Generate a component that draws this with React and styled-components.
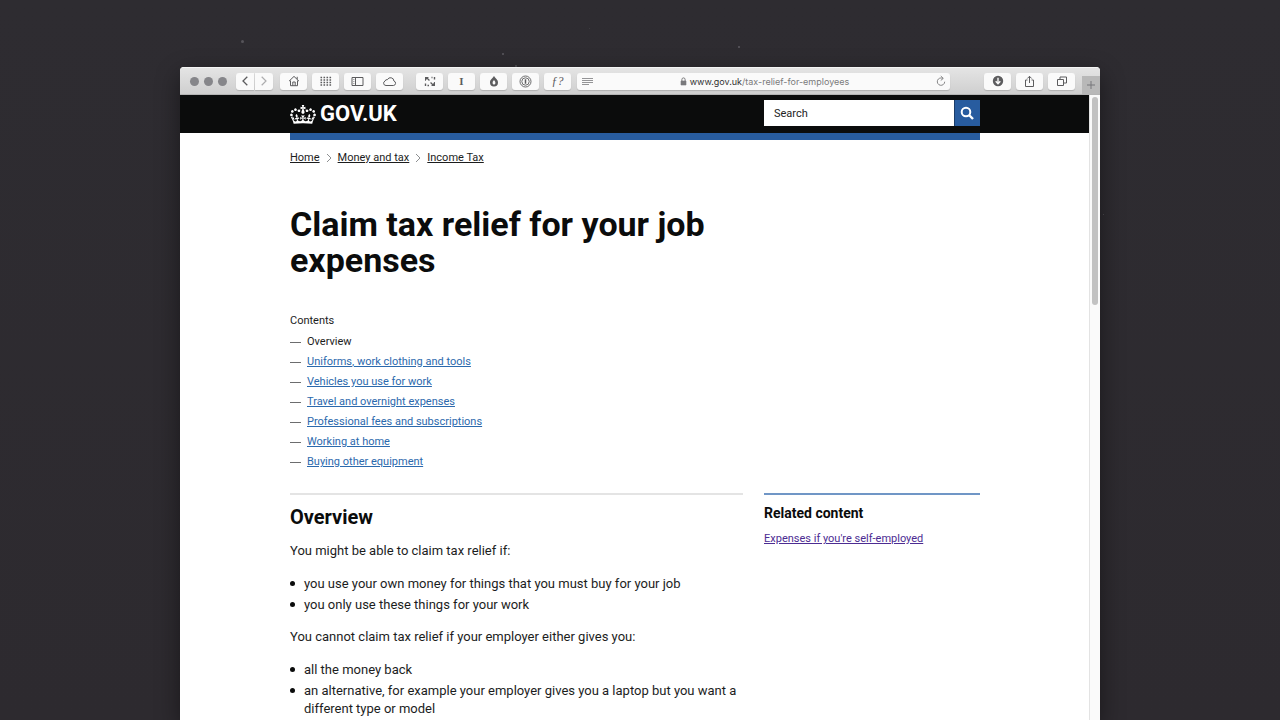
import React from "react";
import styled, { createGlobalStyle } from "styled-components";

const color = {
  ink: "#0b0c0c",
  text: "#1c1d1d",
  blue: "#285c9f",
  link: "#2b69ad",
  visited: "#4c2c92",
  grey: "#8d8f91",
  rule: "#e4e4e4",
  icon: "#5c5c5e",
};

const GlobalStyle = createGlobalStyle`
  *, *::before, *::after { box-sizing: border-box; }
  body {
    margin: 0;
    background: #2d2b30;
    color: ${color.text};
    font-family: Roboto, "Liberation Sans", sans-serif;
  }
  button, input { font: inherit; color: inherit; }
`;

const Desktop = styled.div`
  position: relative;
  display: flex;
  min-height: 100vh;
  padding: 67px 180px 0;
  overflow: hidden;
  background: linear-gradient(#2e2c31, #2d2a2f);
`;

const Speck = styled.span`
  position: absolute;
  left: ${(p) => p.$x}px;
  top: ${(p) => p.$y}px;
  width: ${(p) => p.$size}px;
  height: ${(p) => p.$size}px;
  border-radius: 50%;
  background: ${(p) => p.$tone};
`;

const Window = styled.div`
  position: relative;
  display: flex;
  flex: 1;
  flex-direction: column;
  min-width: 0;
  border-radius: 4px 4px 0 0;
  overflow: hidden;
  background: #fff;
  box-shadow: 0 8px 24px rgba(0, 0, 0, 0.45);
`;

/* Browser chrome */

const Toolbar = styled.div`
  display: flex;
  align-items: center;
  height: 28px;
  padding-left: 10px;
  border-top: 1px solid #f4f4f4;
  border-bottom: 1px solid #b4b4b4;
  background: linear-gradient(#e4e4e4, #cfcfcf);
`;

const Lights = styled.div`
  display: flex;
  gap: 5px;
  margin-right: 9px;
`;

const Light = styled.button`
  width: 9px;
  height: 9px;
  padding: 0;
  border: 0;
  border-radius: 50%;
  background: #86868a;
`;

const Group = styled.div`
  display: flex;
  gap: ${(p) => p.$gap}px;
  margin-right: ${(p) => p.$after}px;
`;

const ToolButton = styled.button`
  display: flex;
  align-items: center;
  justify-content: center;
  width: ${(p) => (p.$narrow ? 18 : 27)}px;
  height: 17px;
  padding: 0;
  border: 0;
  border-radius: ${(p) => p.$corners || "3px"};
  background: #fafafa;
  box-shadow: 0 1px 1px rgba(0, 0, 0, 0.16);
  color: ${(p) => (p.$faded ? "#adadaf" : color.icon)};
`;

const GlyphLabel = styled.span`
  font: ${(p) => (p.$slanted ? "italic 12px" : "bold 11px")} / 16px
    "Liberation Serif", serif;
`;

const AddressBar = styled.div`
  display: flex;
  flex: 1;
  align-items: center;
  justify-content: space-between;
  min-width: 0;
  height: 17px;
  margin-right: 34px;
  padding: 0 4px 0 5px;
  border-radius: 3px;
  background: #fafafa;
  box-shadow: 0 1px 1px rgba(0, 0, 0, 0.16);
`;

const PlainButton = styled.button`
  display: flex;
  align-items: center;
  gap: 3px;
  min-width: 0;
  padding: 0;
  border: 0;
  background: none;
  color: #7a7a7c;
  font-size: 9px;
  line-height: 17px;
  font-family: Inter, "Liberation Sans", sans-serif;
  white-space: nowrap;
`;

const Host = styled.span`
  color: #333;
`;

const NewTab = styled.button`
  display: flex;
  align-items: center;
  justify-content: center;
  align-self: flex-end;
  width: 18px;
  height: 18px;
  margin-left: 7px;
  padding: 0;
  border: 0;
  background: #b8b8b8;
  color: #77777a;
`;

const Viewport = styled.div`
  display: flex;
  flex: 1;
`;

const Page = styled.div`
  flex: 1;
  min-width: 0;
`;

const ScrollTrack = styled.div`
  width: 11px;
  padding: 2px 2px 0;
  border-left: 1px solid #e3e3e3;
  background: #fafafa;
`;

const ScrollThumb = styled.div`
  height: 208px;
  border-radius: 4px;
  background: #c2c2c2;
`;

/* Site */

const Inner = styled.div`
  max-width: 910px;
  padding: 0 109px 0 110px;
`;

const Header = styled.header`
  height: 38px;
  background: ${color.ink};
`;

const HeaderRow = styled(Inner)`
  display: flex;
  align-items: flex-start;
  justify-content: space-between;
  padding-top: 5px;
`;

const Logo = styled.a`
  display: flex;
  align-items: center;
  gap: 4px;
  color: #fff;
  font-size: 22px;
  font-weight: 700;
  line-height: 28px;
  text-decoration: none;
`;

const SearchForm = styled.form`
  display: flex;
  width: 216px;
  height: 26px;
`;

const SearchInput = styled.input`
  flex: 1;
  min-width: 0;
  padding: 0 10px;
  border: 0;
  border-radius: 0;
  background: #fff;
  font-size: 11px;
  &::placeholder { color: #222; opacity: 1; }
`;

const SearchButton = styled.button`
  display: flex;
  align-items: center;
  justify-content: center;
  width: 26px;
  padding: 0;
  border: 0;
  box-shadow: inset 1px 0 #1b3c68;
  background: ${color.blue};
  color: #fff;
`;

const BlueBar = styled.div`
  height: 7px;
  background: ${color.blue};
`;

const Breadcrumbs = styled.ol`
  display: flex;
  align-items: center;
  margin: 0;
  padding: 10px 0 0;
  list-style: none;
  font-size: 11px;
  line-height: 16px;
`;

const Crumb = styled.li`
  display: flex;
  align-items: center;
  svg { margin: 0 6px; }
`;

const CrumbLink = styled.a`
  color: ${color.text};
  text-underline-offset: 1px;
`;

const Columns = styled.div`
  display: grid;
  grid-template-columns: minmax(0, 1fr) 216px;
  column-gap: 21px;
`;

const Title = styled.h1`
  margin: 40px 0 34px;
  color: ${color.ink};
  font-size: 34px;
  line-height: 36px;
`;

const ContentsTitle = styled.h2`
  margin: 0 0 2px;
  font-size: 11px;
  font-weight: 400;
  line-height: 18px;
`;

const ContentsList = styled.ol`
  margin: 0 0 21px;
  padding: 0;
  list-style: none;
  font-size: 11px;
  line-height: 20px;
`;

const ContentsItem = styled.li`
  display: flex;
  align-items: center;
  gap: 6px;
  &::before {
    content: "";
    width: 11px;
    height: 1px;
    background: #6c6d6e;
  }
`;

const TextLink = styled.a`
  color: ${(p) => (p.$visited ? color.visited : color.link)};
  text-underline-offset: 1px;
`;

const Article = styled.article`
  border-top: 2px solid ${color.rule};
`;

const SectionTitle = styled.h2`
  margin: 10px 0 13px;
  color: ${color.ink};
  font-size: 20px;
  line-height: 24px;
`;

const Para = styled.p`
  margin: 0 0 15px;
  font-size: 13px;
  line-height: 18px;
`;

const Bullets = styled.ul`
  display: grid;
  row-gap: 3px;
  margin: 0 0 14px;
  padding: 0;
  list-style: none;
  font-size: 13px;
  line-height: 18px;
  &:last-child { margin-bottom: 0; }
`;

const Bullet = styled.li`
  display: flex;
  gap: 9px;
  &::before {
    content: "";
    flex: none;
    width: 5px;
    height: 5px;
    margin-top: 6px;
    border-radius: 50%;
    background: ${color.ink};
  }
`;

const Related = styled.aside`
  border-top: 2px solid #7096c6;
  font-size: 11px;
  line-height: 16px;
`;

const RelatedTitle = styled.h2`
  margin: 9px 0;
  color: ${color.ink};
  font-size: 14px;
  line-height: 18px;
`;

/* Icons */

const Icon = ({ w = 14, h = 14, sw = 1, children }) => (
  <svg
    width={w}
    height={h}
    viewBox={`0 0 ${w} ${h}`}
    fill="none"
    stroke="currentColor"
    strokeWidth={sw}
    aria-hidden="true"
  >
    {children}
  </svg>
);

const icons = {
  back: <Icon w={8} h={12} sw={1.3}><path d="M6.3 1.8 2 6l4.3 4.2" /></Icon>,
  forward: <Icon w={8} h={12} sw={1.2}><path d="M1.7 1.8 6 6l-4.3 4.2" /></Icon>,
  home: (
    <Icon>
      <path d="M2 7.2 7 2.4l5 4.8M3.5 6.5v5.2h7V6.5M10.2 5.2V2.8" />
      <path d="M5.8 11.7V8h2.4v3.7" />
    </Icon>
  ),
  grid: (
    <Icon w={12} h={10}>
      <path d="M.5 1.5h11M.5 4h11M.5 6.5h11M.5 9h11" strokeDasharray="1.6 1.4" strokeWidth="1.3" />
    </Icon>
  ),
  sidebar: (
    <Icon w={13} h={11}>
      <path d="M1 1.5h11v8H1zM4.5 1.5v8" />
      <path d="M2 3.5h1.5M2 5.5h1.5M2 7.5h1.5" strokeWidth=".5" />
    </Icon>
  ),
  cloud: (
    <Icon w={15} h={11}>
      <path d="M4 9.5h7.4a2.3 2.3 0 0 0 .5-4.5 3.4 3.4 0 0 0-6.5-1.3A2 2 0 0 0 3 5.1 2.3 2.3 0 0 0 4 9.5z" />
    </Icon>
  ),
  expand: (
    <Icon w={12} h={12}>
      <g fill="currentColor" stroke="none">
        <path d="M1 2h4L3.9 3.1l2 2-.9.9-2-2L1.7 5.3V6H1zM11 11H7l1.1-1.1-2-2 .9-.9 2 2L10.3 7H11z" />
      </g>
      <path d="M7.5 2.5h1M10.5 2v2.5M1.5 8.5V11M3.5 10.5h1.5" strokeWidth="1.4" />
    </Icon>
  ),
  flame: (
    <Icon w={10} h={12}>
      <path
        d="M5 .8C5.6 3 9 4.3 9 7.5a4 3.9 0 0 1-8 0C1 4.3 4.4 3 5 .8zM5 5C4.300 6 3.600 6.700 3.600 7.900a1.400 1.600 0 0 0 2.800 0C6.400 6.700 5.700 6 5 5z"
        fill="currentColor"
        fillRule="evenodd"
        stroke="none"
      />
    </Icon>
  ),
  password: (
    <Icon w={13} h={13}>
      <circle cx="6.5" cy="6.5" r="5.5" strokeWidth=".9" />
      <circle cx="6.5" cy="6.5" r="3.7" strokeWidth=".9" />
      <path d="M6.5 4.3v4.4" strokeWidth="1.5" />
    </Icon>
  ),
  reader: (
    <Icon w={11} h={9}>
      <path d="M0 1.5h11M0 3.5h11M0 5.5h11M0 7.5h7" strokeWidth=".8" />
    </Icon>
  ),
  lock: (
    <Icon w={7} h={9}>
      <path d="M1 4h5v4H1z" fill="currentColor" stroke="currentColor" strokeWidth=".6" />
      <path d="M1.9 4V2.5a1.6 1.6 0 0 1 3.2 0V4" />
    </Icon>
  ),
  reload: (
    <Icon w={10} h={12}>
      <path d="M6.8 3.4A3.7 3.7 0 1 0 8.7 6.7M4.8 1l2.500 2.400-2.500 2" strokeWidth=".9" />
    </Icon>
  ),
  download: (
    <Icon w={12} h={12}>
      <circle cx="6" cy="6" r="5.2" fill="currentColor" stroke="none" />
      <path d="M6 2.800v5.500M3.700 6.300 6 8.700l2.300-2.400" stroke="#fafafa" strokeWidth="1.4" />
    </Icon>
  ),
  share: (
    <Icon w={11} h={13}>
      <path d="M3.500 5H1.500v6.500h8V5H7.500M5.500 8V1.300M3.300 3.500l2.200-2.200 2.200 2.200" />
    </Icon>
  ),
  tabs: (
    <Icon w={12} h={12}>
      <path d="M1.500 4.500h6v6h-6zM4 4.500v-2.500h6.500v6H7.500" />
    </Icon>
  ),
  plus: <Icon w={10} h={10}><path d="M5 1v8M1 5h8" /></Icon>,
  search: (
    <Icon w={14} h={14} sw={2}>
      <circle cx="6" cy="6" r="4.3" />
      <path d="m9 9 4 4" strokeWidth="2.4" />
    </Icon>
  ),
  chevron: <Icon w={6} h={10}><path d="M1 1l4 4-4 4" stroke={color.grey} /></Icon>,
};

const Crown = () => (
  <svg width="26" height="19" viewBox="0 0 132 97" fill="currentColor" aria-hidden="true">
    <path
      fillRule="evenodd"
      d="M25 30.2c3.5 1.500 7.700-.2 9.100-3.700 1.500-3.600-.2-7.800-3.900-9.200-3.600-1.400-7.600.3-9.100 3.900-1.400 3.500.3 7.500 3.900 9zM9 39.500c3.600 1.500 7.800-.2 9.200-3.700 1.500-3.600-.2-7.800-3.900-9.100-3.600-1.500-7.600.2-9.100 3.800-1.400 3.500.3 7.500 3.800 9zM4.400 57.200c3.500 1.500 7.700-.2 9.100-3.800 1.500-3.600-.2-7.700-3.900-9.100-3.500-1.500-7.600.3-9.100 3.800-1.400 3.500.3 7.600 3.900 9.100zm38.300-21.400c3.500 1.500 7.700-.2 9.100-3.800 1.500-3.600-.2-7.700-3.900-9.100-3.600-1.500-7.600.3-9.100 3.800-1.300 3.600.4 7.700 3.900 9.100zm64.400-5.600c-3.600 1.500-7.800-.2-9.100-3.700-1.500-3.600.2-7.800 3.800-9.200 3.600-1.400 7.700.3 9.200 3.900 1.300 3.500-.4 7.500-3.900 9zm15.900 9.300c-3.600 1.500-7.700-.2-9.100-3.700-1.500-3.600.2-7.800 3.700-9.100 3.600-1.500 7.700.2 9.200 3.800 1.500 3.500-.3 7.500-3.800 9zm4.700 17.700c-3.600 1.500-7.800-.2-9.200-3.800-1.500-3.600.2-7.700 3.900-9.100 3.600-1.500 7.700.3 9.200 3.800 1.300 3.500-.4 7.600-3.900 9.100zM89.300 35.800c-3.600 1.500-7.800-.2-9.200-3.800-1.400-3.600.2-7.700 3.900-9.100 3.600-1.500 7.700.3 9.200 3.800 1.400 3.600-.3 7.700-3.900 9.100zM69.700 17.700l8.900 4.700V9.300l-8.900 2.800c-.2-.3-.5-.6-.9-.9L72.400 0H59.600l3.500 11.200c-.3.3-.6.5-.9.9l-8.800-2.800v13.100l8.800-4.700c.3.3.6.7.9.9l-5 15.400v.1c-.2.8-.4 1.600-.4 2.400 0 4.100 3.100 7.500 7 8.100h.2c.3 0 .7.1 1 .1.4 0 .7 0 1-.1h.2c4-.6 7.100-4.100 7.100-8.100 0-.8-.1-1.700-.4-2.400V34l-5.100-15.400c.4-.2.7-.6 1-.9zM66 92.800c16.900 0 32.800 1.100 47.100 3.200 4-16.900 8.900-26.700 14-33.500l-9.600-3.400c1 4.900 1.100 7.200 0 10.200-1.500-1.400-3-4.300-4.200-8.700L108.600 76c2.800-2 5-3.200 7.500-3.300-4.400 9.400-10 11.900-13.600 11.200-4.300-.8-6.300-4.600-5.600-7.900 1-4.700 5.700-5.900 8-.5 4.300-8.700-3-11.400-7.600-8.800 7.100-7.200 7.900-13.500 2.100-21.100-8 6.100-8.100 12.300-4.500 20.800-4.700-5.400-12.100-2.500-9.500 6.200 3.400-5.200 7.900-2 7.200 3.100-.6 4.300-6.400 7.800-13.500 7.200-10.300-.9-10.900-8-11.200-13.800 2.500-.5 7.100 1.800 11 7.300L80.200 60c-4.100 4.400-8 5.300-12.300 5.400 1.400-4.400 8-11.600 8-11.600H55.500s6.400 7.200 7.900 11.600c-4.200-.1-8-1-12.300-5.400l1.400 16.400c3.900-5.500 8.500-7.700 10.900-7.300-.3 5.800-.9 12.800-11.100 13.800-7.200.6-12.900-2.900-13.500-7.200-.7-5 3.800-8.300 7.100-3.100 2.700-8.700-4.600-11.600-9.400-6.200 3.700-8.500 3.600-14.700-4.600-20.800-5.800 7.600-5 13.900 2.200 21.100-4.700-2.600-11.900.1-7.700 8.800 2.300-5.500 7.100-4.200 8.100.5.7 3.300-1.300 7.100-5.700 7.900-3.500.7-9-1.800-13.500-11.200 2.500.1 4.700 1.300 7.500 3.300l-4.700-15.400c-1.200 4.400-2.700 7.200-4.300 8.700-1.100-3-.9-5.300 0-10.200l-9.500 3.400c5 6.900 9.900 16.700 14 33.500 14.800-2.100 30.800-3.200 47.700-3.200z"
    />
  </svg>
);

/* Content */

const specks = [
  [241, 40, 3, "#56545a"],
  [502, 53, 2, "#5c5a60"],
  [515, 65, 2, "#56545a"],
  [738, 46, 2, "#5c5a60"],
  [589, 28, 1, "#424046"],
  [1103, 214, 1, "#56545a"],
];

const crumbs = ["Home", "Money and tax", "Income Tax"];

const sections = [
  "Uniforms, work clothing and tools",
  "Vehicles you use for work",
  "Travel and overnight expenses",
  "Professional fees and subscriptions",
  "Working at home",
  "Buying other equipment",
];

const browsing = [
  ["Home page", icons.home],
  ["Top sites", icons.grid],
  ["Sidebar", icons.sidebar],
  ["iCloud tabs", icons.cloud],
];

const extensions = [
  ["Resize", icons.expand],
  ["Instapaper", <GlyphLabel>I</GlyphLabel>],
  ["Flame", icons.flame],
  ["Passwords", icons.password],
  ["Fonts", <GlyphLabel $slanted>ƒ?</GlyphLabel>],
];

const actions = [
  ["Downloads", icons.download],
  ["Share", icons.share],
  ["Show all tabs", icons.tabs],
];

const ToolGroup = ({ items, after }) => (
  <Group $gap={5} $after={after}>
    {items.map(([label, icon]) => (
      <ToolButton key={label} type="button" aria-label={label}>
        {icon}
      </ToolButton>
    ))}
  </Group>
);

const BrowserToolbar = () => (
  <Toolbar>
    <Lights>
      <Light type="button" aria-label="Close" />
      <Light type="button" aria-label="Minimise" />
      <Light type="button" aria-label="Zoom" />
    </Lights>
    <Group $gap={1} $after={7}>
      <ToolButton type="button" aria-label="Back" $narrow $corners="3px 0 0 3px">
        {icons.back}
      </ToolButton>
      <ToolButton type="button" aria-label="Forward" $narrow $faded $corners="0 3px 3px 0">
        {icons.forward}
      </ToolButton>
    </Group>
    <ToolGroup items={browsing} after={13} />
    <ToolGroup items={extensions} after={6} />
    <AddressBar>
      <PlainButton type="button" aria-label="Reader view">{icons.reader}</PlainButton>
      <PlainButton type="button">
        {icons.lock}
        <span><Host>www.gov.uk</Host>/tax-relief-for-employees</span>
      </PlainButton>
      <PlainButton type="button" aria-label="Reload">{icons.reload}</PlainButton>
    </AddressBar>
    <ToolGroup items={actions} after={0} />
    <NewTab type="button" aria-label="New tab">{icons.plus}</NewTab>
  </Toolbar>
);

const SiteHeader = () => (
  <>
    <Header>
      <HeaderRow>
        <Logo href="#home">
          <Crown />
          GOV.UK
        </Logo>
        <SearchForm role="search">
          <SearchInput type="search" aria-label="Search GOV.UK" placeholder="Search" />
          <SearchButton type="button" aria-label="Search">{icons.search}</SearchButton>
        </SearchForm>
      </HeaderRow>
    </Header>
    <Inner>
      <BlueBar />
      <nav aria-label="Breadcrumb">
        <Breadcrumbs>
          {crumbs.map((label, i) => (
            <Crumb key={label}>
              {i > 0 && icons.chevron}
              <CrumbLink href="#crumb">{label}</CrumbLink>
            </Crumb>
          ))}
        </Breadcrumbs>
      </nav>
    </Inner>
  </>
);

const Guide = () => (
  <Inner as="main">
    <Columns>
      <div>
        <Title>Claim tax relief for your job expenses</Title>
        <nav aria-label="Contents">
          <ContentsTitle>Contents</ContentsTitle>
          <ContentsList>
            <ContentsItem>Overview</ContentsItem>
            {sections.map((label) => (
              <ContentsItem key={label}>
                <TextLink href="#section">{label}</TextLink>
              </ContentsItem>
            ))}
          </ContentsList>
        </nav>
      </div>
    </Columns>
    <Columns>
      <Article>
        <SectionTitle>Overview</SectionTitle>
        <Para>You might be able to claim tax relief if:</Para>
        <Bullets>
          <Bullet>you use your own money for things that you must buy for your job</Bullet>
          <Bullet>you only use these things for your work</Bullet>
        </Bullets>
        <Para>You cannot claim tax relief if your employer either gives you:</Para>
        <Bullets>
          <Bullet>all the money back</Bullet>
          <Bullet>
            an alternative, for example your employer gives you a laptop but you want a
            different type or model
          </Bullet>
        </Bullets>
      </Article>
      <Related>
        <RelatedTitle>Related content</RelatedTitle>
        <TextLink href="#self-employed" $visited>Expenses if you're self-employed</TextLink>
      </Related>
    </Columns>
  </Inner>
);

export default function App() {
  return (
    <>
      <GlobalStyle />
      <Desktop>
        {specks.map(([x, y, size, tone]) => (
          <Speck key={x} $x={x} $y={y} $size={size} $tone={tone} />
        ))}
        <Window>
          <BrowserToolbar />
          <Viewport>
            <Page>
              <SiteHeader />
              <Guide />
            </Page>
            <ScrollTrack>
              <ScrollThumb />
            </ScrollTrack>
          </Viewport>
        </Window>
      </Desktop>
    </>
  );
}
